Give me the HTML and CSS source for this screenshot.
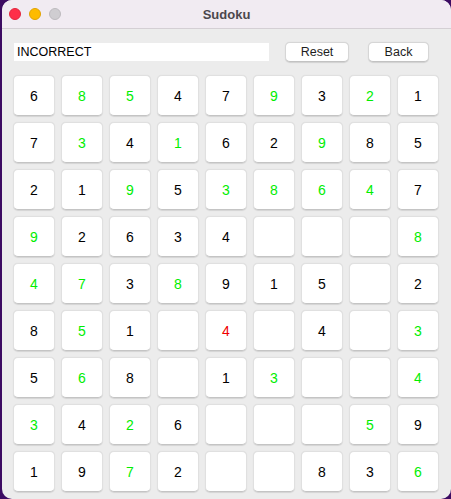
FILE: index.html
```html
<!DOCTYPE html>
<html>
<head>
<meta charset="utf-8">
<link rel="stylesheet" href="styles.css">
</head>
<body>
<div class="window">
  <div class="titlebar">
    <div class="lights">
      <span class="light red"></span>
      <span class="light yellow"></span>
      <span class="light gray"></span>
    </div>
    <div class="title">Sudoku</div>
  </div>
  <div class="content">
    <div class="controls">
      <div class="status">INCORRECT</div>
      <button class="btn reset">Reset</button>
      <button class="btn back">Back</button>
    </div>
    <div class="grid">
      <div class="cell">6</div><div class="cell g">8</div><div class="cell g">5</div><div class="cell">4</div><div class="cell">7</div><div class="cell g">9</div><div class="cell">3</div><div class="cell g">2</div><div class="cell">1</div>
      <div class="cell">7</div><div class="cell g">3</div><div class="cell">4</div><div class="cell g">1</div><div class="cell">6</div><div class="cell">2</div><div class="cell g">9</div><div class="cell">8</div><div class="cell">5</div>
      <div class="cell">2</div><div class="cell">1</div><div class="cell g">9</div><div class="cell">5</div><div class="cell g">3</div><div class="cell g">8</div><div class="cell g">6</div><div class="cell g">4</div><div class="cell">7</div>
      <div class="cell g">9</div><div class="cell">2</div><div class="cell">6</div><div class="cell">3</div><div class="cell">4</div><div class="cell"></div><div class="cell"></div><div class="cell"></div><div class="cell g">8</div>
      <div class="cell g">4</div><div class="cell g">7</div><div class="cell">3</div><div class="cell g">8</div><div class="cell">9</div><div class="cell">1</div><div class="cell">5</div><div class="cell"></div><div class="cell">2</div>
      <div class="cell">8</div><div class="cell g">5</div><div class="cell">1</div><div class="cell"></div><div class="cell r">4</div><div class="cell"></div><div class="cell">4</div><div class="cell"></div><div class="cell g">3</div>
      <div class="cell">5</div><div class="cell g">6</div><div class="cell">8</div><div class="cell"></div><div class="cell">1</div><div class="cell g">3</div><div class="cell"></div><div class="cell"></div><div class="cell g">4</div>
      <div class="cell g">3</div><div class="cell">4</div><div class="cell g">2</div><div class="cell">6</div><div class="cell"></div><div class="cell"></div><div class="cell"></div><div class="cell g">5</div><div class="cell">9</div>
      <div class="cell">1</div><div class="cell">9</div><div class="cell g">7</div><div class="cell">2</div><div class="cell"></div><div class="cell"></div><div class="cell">8</div><div class="cell">3</div><div class="cell g">6</div>
    </div>
  </div>
</div>
</body>
</html>
```
FILE: styles.css
```css
html, body {
  margin: 0;
  padding: 0;
}
body {
  background: #3c0b62;
  width: 451px;
  height: 499px;
  overflow: hidden;
  font-family: "Liberation Sans", Arial, sans-serif;
}
.window {
  margin-left: 2px;
  width: 449px;
  height: 499px;
  background: #ececec;
  border-radius: 10px;
  overflow: hidden;
}
.titlebar {
  height: 28px;
  background: #f1ebf2;
  border-bottom: 1px solid #d4cfd4;
  display: flex;
  align-items: center;
  position: relative;
}
.lights {
  display: flex;
  gap: 8px;
  padding-left: 7px;
}
.light {
  width: 12px;
  height: 12px;
  border-radius: 50%;
  box-sizing: border-box;
}
.red { background: #fe2f49; border: 1px solid #e2263e; }
.yellow { background: #febb00; border: 1px solid #e0a300; }
.gray { background: #cfcdd1; border: 1px solid #bcbabe; }
.title {
  position: absolute;
  left: 0;
  right: 0;
  text-align: center;
  font-weight: bold;
  font-size: 13px;
  color: #4b474d;
  top: 7px;
}
.content {
  padding: 13px 0 0 11px;
}
.controls {
  display: flex;
  align-items: center;
  height: 20px;
}
.status {
  margin-left: 1px;
  width: 252px;
  height: 18px;
  line-height: 18px;
  background: #fff;
  padding-left: 3px;
  font-size: 12.5px;
  color: #000;
}
.btn {
  height: 20px;
  box-sizing: border-box;
  background: #fff;
  border: 1px solid #d6d6d6;
  border-bottom-color: #c2c2c2;
  border-radius: 5px;
  box-shadow: 0 0.5px 1px rgba(0,0,0,0.12);
  font-family: "Liberation Sans", Arial, sans-serif;
  font-size: 12.5px;
  color: #1e1e1e;
  padding: 0;
}
.reset {
  margin-left: 16px;
  width: 64px;
}
.back {
  margin-left: 19px;
  width: 61px;
}
.grid {
  margin-top: 13px;
  display: grid;
  grid-template-columns: repeat(9, 42px);
  grid-auto-rows: 41px;
  gap: 6px;
}
.cell {
  background: #fff;
  border-radius: 5px;
  box-sizing: border-box;
  border: 1px solid #e0e0e0;
  border-bottom-color: #c4c4c4;
  box-shadow: 0 0.5px 1px rgba(0,0,0,0.1);
  display: flex;
  align-items: center;
  justify-content: center;
  font-size: 14px;
  color: #000;
}
.g { color: #00ee00; }
.r { color: #f00000; }
```
